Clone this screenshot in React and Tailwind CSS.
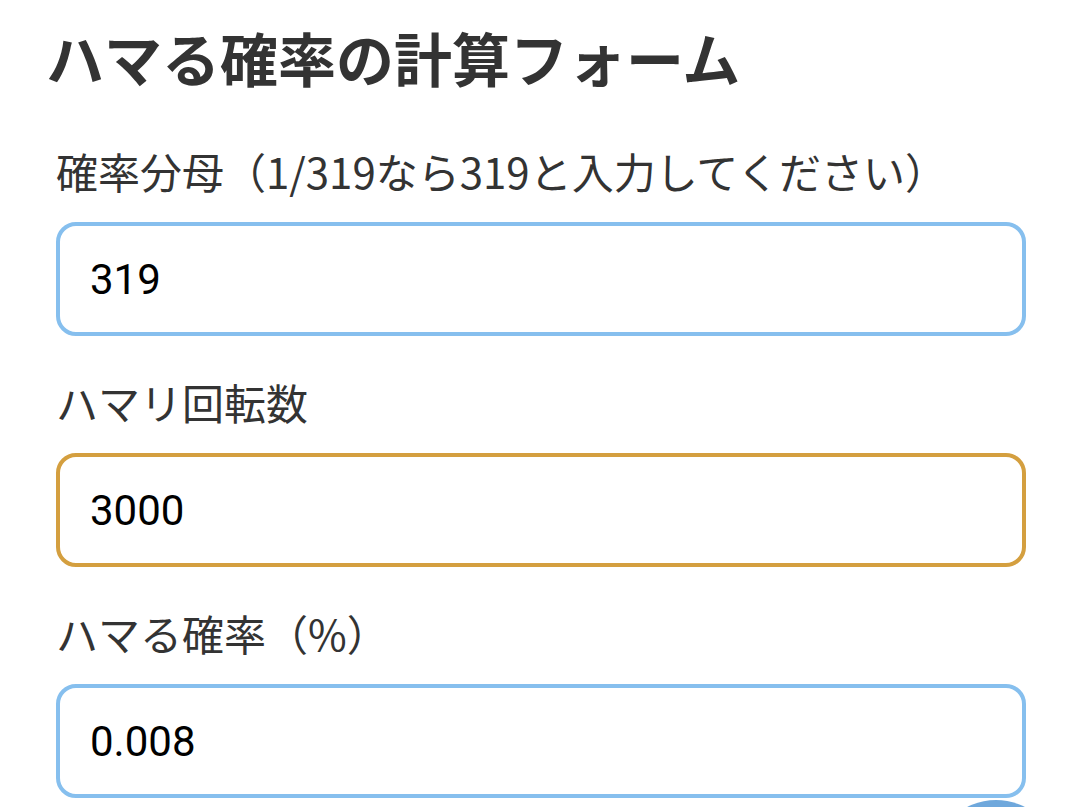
import { useState } from 'react';

const Field = ({ label, value, onChange, focused }) => (
  <div className="flex flex-col">
    <label className="text-[42px] leading-[56px] text-[#333333]">{label}</label>
    <input
      type="text"
      value={value}
      onChange={(e) => onChange(e.target.value)}
      className={`mt-[23px] h-[114px] w-full rounded-[20px] border-[4px] bg-white px-[30px] text-[42px] text-black outline-none ${
        focused ? 'border-[#d49f3f]' : 'border-[#86bfee]'
      }`}
      style={{ fontFamily: 'Roboto, "Noto Sans CJK JP", sans-serif' }}
    />
  </div>
);

const App = () => {
  const [denominator, setDenominator] = useState('319');
  const [spins, setSpins] = useState('3000');
  const [rate, setRate] = useState('0.008');

  return (
    <div
      className="relative h-[807px] w-[1070px] overflow-hidden bg-white pl-[46px] pr-[44px] pt-[22px]"
      style={{ fontFamily: '"Noto Sans CJK JP", "Noto Sans", sans-serif' }}
    >
      <h1 className="text-[58px] font-bold leading-[70px] text-[#333333]">ハマる確率の計算フォーム</h1>

      <div className="mt-[51px] flex flex-col gap-[38px] pl-[10px]">
        <Field label="確率分母（1/319なら319と入力してください）" value={denominator} onChange={setDenominator} />
        <Field label="ハマリ回転数" value={spins} onChange={setSpins} focused />
        <Field label="ハマる確率（%）" value={rate} onChange={setRate} />
      </div>

      {/* floating button peeking from the bottom */}
      <div className="absolute left-[933px] top-[800px] h-[126px] w-[126px] rounded-full bg-[#6fa8dc]" />
    </div>
  );
};

export default App;
